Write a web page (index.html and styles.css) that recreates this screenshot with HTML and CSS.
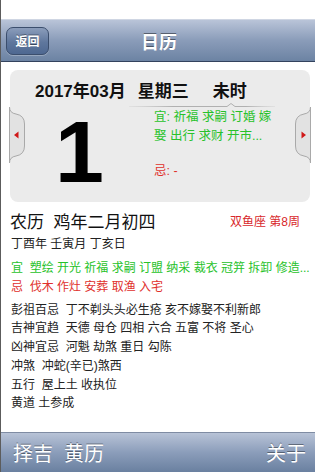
FILE: index.html
```html
<!DOCTYPE html>
<html lang="zh-CN">
<head>
<meta charset="utf-8">
<title>日历</title>
<link rel="stylesheet" href="styles.css">
</head>
<body>
<div class="app">
  <div class="status"></div>
  <header class="navbar">
    <div class="nav-left"><button class="back">返回</button></div>
    <div class="nav-title">日历</div>
    <div class="nav-right"></div>
  </header>
  <main class="main">
    <section class="card">
      <div class="card-head">
        <span>2017年03月</span>
        <span class="week">星期三</span>
        <span class="hour">未时</span>
      </div>
      <div class="card-body">
        <div class="day">1</div>
        <div class="card-right">
          <svg class="divider" width="146" height="5" viewBox="0 0 146 5">
            <defs>
              <linearGradient id="dg" x1="0" x2="1" y1="0" y2="0">
                <stop offset="0" stop-color="#c8c8c8" stop-opacity="0.3"/>
                <stop offset="0.3" stop-color="#b0b0b0"/>
                <stop offset="0.8" stop-color="#b0b0b0"/>
                <stop offset="1" stop-color="#c8c8c8" stop-opacity="0.3"/>
              </linearGradient>
            </defs>
            <path d="M0 3.5 H98 L102 0.5 L106 3.5 H146" fill="none" stroke="url(#dg)" stroke-width="1"/>
          </svg>
          <div class="yi-box">宜: 祈福 求嗣 订婚 嫁<br>娶 出行 求财 开市...</div>
          <div class="ji-box">忌: -</div>
        </div>
      </div>
      <div class="tab tab-left">
        <svg width="17" height="56" viewBox="0 0 17 56">
          <path d="M0.5 0 Q0.5 6 7 7 Q15.5 8.5 15.5 17 L15.5 39 Q15.5 47.5 7 49 Q0.5 50 0.5 56 Z" fill="#e2e2e2" stroke="#a9a9a9" stroke-width="1"/>
          <path d="M5 28 L9.5 24.5 L9.5 31.5 Z" fill="#d01818"/>
        </svg>
      </div>
      <div class="tab tab-right">
        <svg width="17" height="56" viewBox="0 0 17 56">
          <path d="M16.5 0 Q16.5 6 10 7 Q1.5 8.5 1.5 17 L1.5 39 Q1.5 47.5 10 49 Q16.5 50 16.5 56 Z" fill="#e2e2e2" stroke="#a9a9a9" stroke-width="1"/>
          <path d="M12 28 L7.5 24.5 L7.5 31.5 Z" fill="#d01818"/>
        </svg>
      </div>
    </section>

    <div class="lunar-row">
      <span class="lunar">农历&nbsp;&nbsp;鸡年二月初四</span>
      <span class="zodiac">双鱼座 第8周</span>
    </div>
    <div class="ganzhi">丁酉年 壬寅月 丁亥日</div>
    <div class="yi">宜&nbsp;&nbsp;塑绘 开光 祈福 求嗣 订盟 纳采 裁衣 冠笄 拆卸 修造...</div>
    <div class="ji">忌&nbsp;&nbsp;伐木 作灶 安葬 取渔 入宅</div>

    <ul class="info">
      <li>彭祖百忌&nbsp;&nbsp;丁不剃头头必生疮 亥不嫁娶不利新郎</li>
      <li>吉神宜趋&nbsp;&nbsp;天德 母仓 四相 六合 五富 不将 圣心</li>
      <li>凶神宜忌&nbsp;&nbsp;河魁 劫煞 重日 勾陈</li>
      <li>冲煞&nbsp;&nbsp;冲蛇(辛已)煞西</li>
      <li>五行&nbsp;&nbsp;屋上土 收执位</li>
      <li>黄道 土参成</li>
    </ul>
  </main>
  <footer class="toolbar">
    <span class="tb-left">择吉&nbsp;&nbsp;黄历</span>
    <span class="tb-right">关于</span>
  </footer>
</div>
</body>
</html>
```

FILE: styles.css
```css
* { box-sizing: border-box; }

html, body {
  margin: 0;
  padding: 0;
  background: #ffffff;
}

body {
  font-family: "Liberation Sans", "Noto Sans CJK SC", sans-serif;
  color: #222;
}

.app {
  width: 315px;
  height: 472px;
  display: flex;
  flex-direction: column;
  border-left: 1px solid #5c5c5c;
  overflow: hidden;
}

.status {
  height: 19px;
  flex: none;
  background: #ffffff;
}

.navbar {
  height: 43px;
  flex: none;
  display: grid;
  grid-template-columns: 1fr auto 1fr;
  align-items: center;
  background: linear-gradient(#b9c4d8, #8a9cb9 50%, #6c83a3);
  border-top: 1px solid #cfd6e3;
  border-bottom: 1px solid #33435e;
}

.nav-left { padding-left: 5px; }

.back {
  width: 43px;
  height: 28px;
  padding: 0;
  border: 1px solid #3b4e6d;
  border-radius: 7px;
  background: linear-gradient(#8b9dbb, #5f779d 55%, #4e6891);
  color: #fff;
  font-family: "Liberation Sans", "Noto Sans CJK SC", sans-serif;
  font-size: 12px;
  font-weight: bold;
  text-shadow: 0 -1px 0 rgba(0, 0, 0, 0.4);
  box-shadow: 0 1px 0 rgba(255, 255, 255, 0.25);
  display: flex;
  align-items: center;
  justify-content: center;
}

.nav-title {
  color: #fff;
  font-size: 18px;
  font-weight: bold;
  text-shadow: 0 -1px 0 rgba(0, 0, 0, 0.45);
  padding-left: 2px;
}

.main {
  flex: 1;
}

.card {
  position: relative;
  width: 300px;
  height: 132px;
  margin: 8px 0 0 9px;
  background: #ebebeb;
  border-radius: 8px;
  padding-top: 12px;
}

.card-head {
  display: flex;
  height: 20px;
  line-height: 20px;
  padding-left: 25px;
  font-size: 17px;
  font-weight: bold;
  color: #111;
}

.week { margin-left: 12px; }
.hour { margin-left: 24px; }

.card-body {
  display: flex;
}

.day {
  width: 119px;
  padding-left: 45px;
  margin-top: 6px;
  font-size: 88px;
  line-height: 88px;
  height: 88px;
  font-weight: bold;
  color: #000;
}

.card-right {
  width: 170px;
}

.divider {
  display: block;
  margin-top: 1px;
}

.yi-box {
  padding-left: 25px;
  font-size: 12.5px;
  line-height: 19px;
  color: #27c22a;
}

.ji-box {
  padding-left: 25px;
  margin-top: 15.5px;
  font-size: 12.5px;
  line-height: 19px;
  color: #e0302c;
}

.tab {
  position: absolute;
  top: 37px;
  width: 17px;
  height: 56px;
}
.tab svg { display: block; }
.tab-left { left: -1px; }
.tab-right { right: -1px; }

.lunar-row {
  display: flex;
  justify-content: space-between;
  align-items: center;
  height: 22px;
  margin-top: 7px;
  padding: 0 15px 0 9px;
}

.lunar {
  font-size: 17px;
  color: #111;
}

.zodiac {
  font-size: 12px;
  color: #d8282c;
}

.ganzhi,
.yi,
.ji {
  padding-left: 10px;
  font-size: 12px;
  line-height: 19px;
  white-space: nowrap;
}

.ganzhi { margin-top: 3.5px; color: #222; }
.yi { margin-top: 5px; color: #27c22a; }
.ji { color: #e0302c; }

.info {
  list-style: none;
  margin: 4px 0 0 0;
  padding: 0 0 0 10px;
  font-size: 12px;
  line-height: 18.8px;
  color: #222;
}

.toolbar {
  height: 40px;
  flex: none;
  display: flex;
  justify-content: space-between;
  align-items: center;
  padding: 0 9px 0 12px;
  background: linear-gradient(#b8c3d7, #8b9dba 50%, #6a80a0);
  border-top: 1px solid #7f8ca3;
  color: #fff;
  font-size: 20px;
  text-shadow: 0 -1px 0 rgba(0, 0, 0, 0.4);
}
```
